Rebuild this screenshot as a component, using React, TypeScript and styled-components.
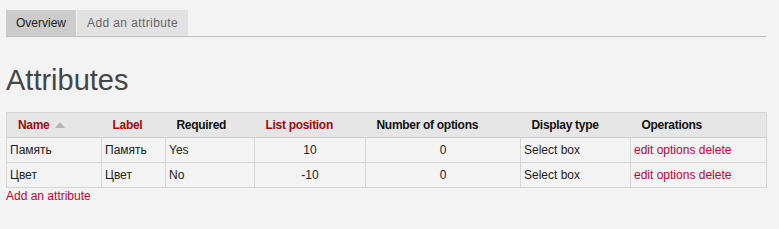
import React from "react";
import styled, { createGlobalStyle } from "styled-components";

const Global = createGlobalStyle`
  html, body { margin: 0; padding: 0; background: #f3f3f3; }
  body { font-family: "Liberation Sans", Arial, sans-serif; font-size: 12px; color: #222; }
`;

const Page = styled.div`
  padding: 10px 13px 0 6px;
`;

const Tabs = styled.ul`
  display: flex;
  gap: 1px;
  margin: 0;
  padding: 0;
  list-style: none;
  border-bottom: 1px solid #bbbbbb;
`;

const Tab = styled.li<{ $active?: boolean }>`
  height: 26px;
  line-height: 26px;
  padding: 0 10px;
  background: ${(p) => (p.$active ? "#cccccc" : "#e2e2e2")};
  color: ${(p) => (p.$active ? "#222" : "#666")};
  font-size: 12px;
  letter-spacing: ${(p) => (p.$active ? "0" : "0.4px")};
  cursor: pointer;
`;

const Title = styled.h1`
  margin: 26px 0 14px;
  font-size: 29px;
  line-height: 35px;
  font-weight: normal;
  color: #454545;
`;

const Table = styled.table`
  width: 760px;
  border-collapse: collapse;
  table-layout: fixed;
  border: 1px solid #d6d6d6;
`;

const Col = styled.col<{ $w: number }>`
  width: ${(p) => p.$w}px;
`;

const Th = styled.th<{ $link?: boolean }>`
  height: 24px;
  padding: 0 0 0 11px;
  text-align: left;
  font-weight: bold;
  letter-spacing: -0.3px;
  background: #e6e6e6;
  border-bottom: 1px solid #cfcfcf;
  color: ${(p) => (p.$link ? "#9e0b0b" : "#111")};
  white-space: nowrap;
  overflow: hidden;
`;

const SortArrow = styled.span`
  display: inline-block;
  margin-left: 6px;
  width: 0;
  height: 0;
  border-left: 5.5px solid transparent;
  border-right: 5.5px solid transparent;
  border-bottom: 6px solid #b4b4b4;
  vertical-align: 1px;
`;

const Td = styled.td<{ $center?: boolean }>`
  height: 24px;
  padding: 0 3px;
  border: 1px solid #d6d6d6;
  text-align: ${(p) => (p.$center ? "center" : "left")};
  white-space: nowrap;
  overflow: hidden;
`;

const Link = styled.a`
  color: #c0023a;
  text-decoration: none;
  cursor: pointer;
`;

const AddLink = styled(Link)`
  display: block;
  margin-top: 1px;
  line-height: 14px;
`;

const widths = [95, 64, 89, 111, 155, 110, 136];

const rows = [
  { name: "Память", label: "Память", required: "Yes", pos: "10", opts: "0", type: "Select box" },
  { name: "Цвет", label: "Цвет", required: "No", pos: "-10", opts: "0", type: "Select box" },
];

export default function App() {
  return (
    <>
      <Global />
      <Page>
        <Tabs>
          <Tab $active>Overview</Tab>
          <Tab>Add an attribute</Tab>
        </Tabs>
        <Title>Attributes</Title>
        <Table>
          <colgroup>
            {widths.map((w, i) => (
              <Col key={i} $w={w} />
            ))}
          </colgroup>
          <thead>
            <tr>
              <Th $link>
                Name<SortArrow />
              </Th>
              <Th $link>Label</Th>
              <Th>Required</Th>
              <Th $link>List position</Th>
              <Th>Number of options</Th>
              <Th>Display type</Th>
              <Th>Operations</Th>
            </tr>
          </thead>
          <tbody>
            {rows.map((r) => (
              <tr key={r.name}>
                <Td>{r.name}</Td>
                <Td>{r.label}</Td>
                <Td>{r.required}</Td>
                <Td $center>{r.pos}</Td>
                <Td $center>{r.opts}</Td>
                <Td>{r.type}</Td>
                <Td>
                  <Link>edit options</Link> <Link>delete</Link>
                </Td>
              </tr>
            ))}
          </tbody>
        </Table>
        <AddLink>Add an attribute</AddLink>
      </Page>
    </>
  );
}
